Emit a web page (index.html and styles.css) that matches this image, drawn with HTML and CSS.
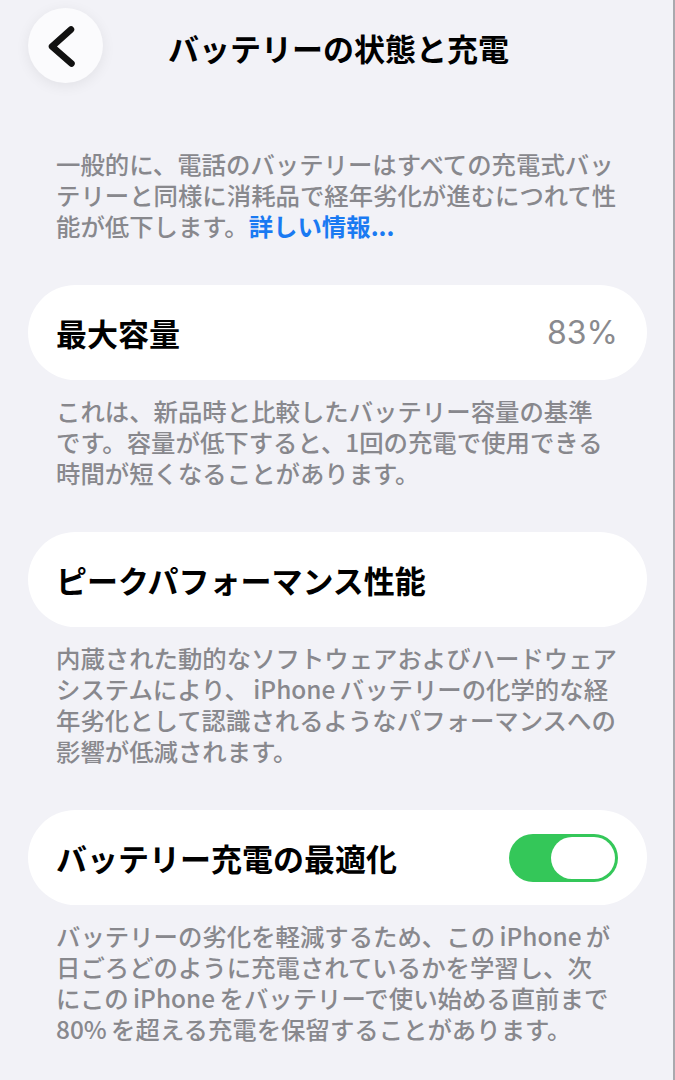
FILE: index.html
```html
<!DOCTYPE html>
<html lang="ja">
<head>
    <meta charset="UTF-8">
    <meta name="viewport" content="width=device-width, initial-scale=1.0">
    <title>バッテリーの状態と充電</title>
    <link rel="stylesheet" href="styles.css">
</head>
<body>
    <div class="screen">
        <header class="nav">
            <button class="back" aria-label="戻る">
                <svg width="75" height="75" viewBox="0 0 75 75">
                    <polyline points="43,21.5 24,38.5 43.5,55.5" fill="none" stroke="#111" stroke-width="6.5" stroke-linecap="round" stroke-linejoin="round"/>
                </svg>
            </button>
            <h1 class="nav-title">バッテリーの状態と充電</h1>
        </header>

        <p class="note intro">一般的に、電話のバッテリーはすべての充電式バッ<br>テリーと同様に消耗品で経年劣化が進むにつれて性<br>能が低下します。<a href="#" class="link">詳しい情報...</a></p>

        <section class="group">
            <div class="cell">
                <span class="cell-label">最大容量</span>
                <span class="cell-value">83%</span>
            </div>
            <p class="note">これは、新品時と比較したバッテリー容量の基準<br>です。容量が低下すると、1回の充電で使用できる<br>時間が短くなることがあります。</p>
        </section>

        <section class="group">
            <div class="cell">
                <span class="cell-label">ピークパフォーマンス性能</span>
            </div>
            <p class="note">内蔵された動的なソフトウェアおよびハードウェア<br>システムにより、<span class="lat">iPhone</span>バッテリーの化学的な経<br>年劣化として認識されるようなパフォーマンスへの<br>影響が低減されます。</p>
        </section>

        <section class="group">
            <div class="cell">
                <span class="cell-label">バッテリー充電の最適化</span>
                <span class="switch on" role="switch" aria-checked="true"><span class="knob"></span></span>
            </div>
            <p class="note">バッテリーの劣化を軽減するため、この<span class="lat">iPhone</span>が<br>日ごろどのように充電されているかを学習し、次<br>にこの<span class="lat">iPhone</span>をバッテリーで使い始める直前まで<br><span class="num">80%</span>を超える充電を保留することがあります。</p>
        </section>
    </div>
</body>
</html>
```

FILE: styles.css
```css
body {
    margin: 0;
    background: #f2f2f7;
    font-family: "Noto Sans CJK JP", "Noto Sans", sans-serif;
    color: #000;
}
.screen {
    box-sizing: border-box;
    width: 675px;
    min-height: 1080px;
    padding: 8px 26px 0 28px;
    border-right: 2px solid #a9a9ae;
}

/* nav bar */
.nav {
    display: flex;
    align-items: center;
    gap: 65px;
    height: 75px;
}
.back {
    width: 75px;
    height: 75px;
    padding: 0;
    border: none;
    border-radius: 50%;
    background: #fbfbfd;
    box-shadow: 0 3px 14px rgba(0,0,0,0.07);
    flex-shrink: 0;
}
.back svg {
    display: block;
}
.nav-title {
    margin: 0;
    font-size: 31px;
    font-weight: 700;
    line-height: 1;
    padding-top: 3px;
}

/* footnotes */
.note {
    margin: 15px 0 0;
    padding: 0 0 0 28px;
    font-size: 24.4px;
    font-weight: 500;
    line-height: 31px;
    color: #88888d;
    white-space: nowrap;
}
.intro {
    margin-top: 65px;
}
.link {
    color: #1a7af2;
    font-weight: 700;
    text-decoration: none;
}
/* latin words get a little air next to kana */
.lat {
    margin: 0 0.18em;
}
.num {
    margin-right: 0.18em;
}

/* grouped cells */
.group {
    margin-top: 44px;
}
.cell {
    display: flex;
    align-items: center;
    justify-content: space-between;
    height: 95px;
    padding: 0 29px 0 28px;
    background: #fff;
    border-radius: 48px;
}
.cell-label {
    font-size: 31px;
    font-weight: 700;
}
.cell-value {
    font-family: Inter, "Noto Sans", sans-serif;
    font-size: 32px;
    color: #8a8a8e;
}

/* toggle */
.switch {
    position: relative;
    width: 109px;
    height: 48px;
    border-radius: 24px;
    background: #e5e5ea;
}
.switch.on {
    background: #34c759;
}
.switch .knob {
    position: absolute;
    top: 3px;
    left: 3px;
    width: 64px;
    height: 42px;
    border-radius: 21px;
    background: #fff;
}
.switch.on .knob {
    left: auto;
    right: 3px;
}
```
